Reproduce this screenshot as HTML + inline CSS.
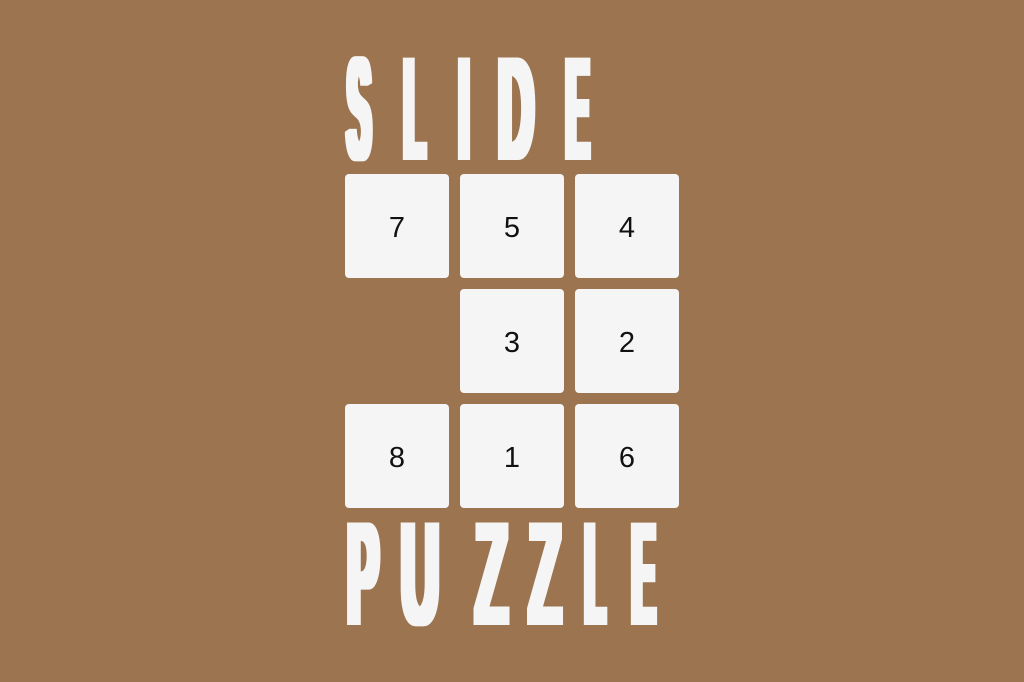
<!DOCTYPE html>
<html><head><meta charset="utf-8"><style>
html,body{margin:0;padding:0;background:#9c7550;width:1024px;height:682px;overflow:hidden}
.t{position:absolute;width:104px;height:104px;background:#f5f5f5;border-radius:4px;font:29px "Liberation Sans",sans-serif;color:#111;display:flex;align-items:center;justify-content:center;box-sizing:border-box;padding-top:5px}
svg{position:absolute;left:0;top:0}
</style></head><body>
<svg width="1024" height="682" font-family="Liberation Sans, sans-serif" font-weight="bold" fill="#f5f5f5" font-size="146" text-anchor="middle">
<defs><filter id="d" x="-10%" y="-10%" width="120%" height="120%"><feMorphology operator="dilate" radius="3.5 1"/></filter></defs>
<g filter="url(#d)">
<text transform="translate(359,159) scale(0.24,1)">S</text>
<text transform="translate(414.5,159) scale(0.235,1)">L</text>
<text transform="translate(464,159) scale(0.25,1)">I</text>
<text transform="translate(516,159) scale(0.34,1)">D</text>
<text transform="translate(577.5,159) scale(0.235,1)">E</text>
<text transform="translate(363,624) scale(0.32,1)">P</text>
<text transform="translate(420,624) scale(0.36,1)">U</text>
<text transform="translate(491.5,624) scale(0.36,1)">Z</text>
<text transform="translate(545,624) scale(0.36,1)">Z</text>
<text transform="translate(595,624) scale(0.22,1)">L</text>
<text transform="translate(643.5,624) scale(0.235,1)">E</text>
</g>
</svg>
<div class="t" style="left:345px;top:174px">7</div>
<div class="t" style="left:460px;top:174px">5</div>
<div class="t" style="left:575px;top:174px">4</div>
<div class="t" style="left:460px;top:289px">3</div>
<div class="t" style="left:575px;top:289px">2</div>
<div class="t" style="left:345px;top:404px">8</div>
<div class="t" style="left:460px;top:404px">1</div>
<div class="t" style="left:575px;top:404px">6</div>
</body></html>
